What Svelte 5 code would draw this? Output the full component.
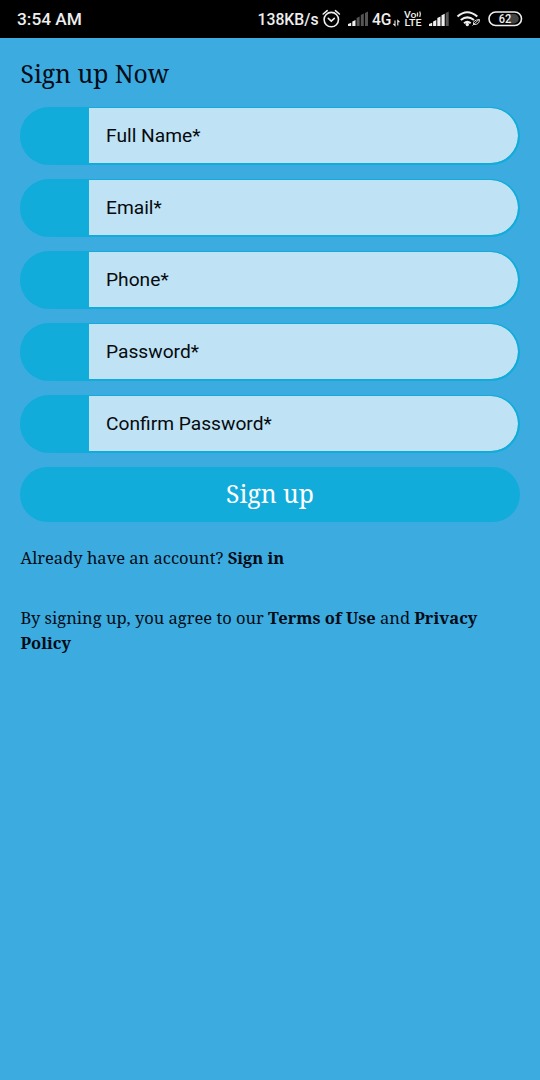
<script>
  const fields = [
    { label: 'Full Name*', type: 'text' },
    { label: 'Email*', type: 'email' },
    { label: 'Phone*', type: 'tel' },
    { label: 'Password*', type: 'password' },
    { label: 'Confirm Password*', type: 'password' }
  ];
</script>

<div class="screen">
  <header class="status">
    <span class="time">3:54 AM</span>
    <svg class="icons" width="290" height="38" viewBox="250 0 290 38" fill="none">
      <text class="st" x="257.5" y="25" font-size="17" textLength="61" lengthAdjust="spacingAndGlyphs">138KB/s</text>
      <g stroke="#eee" stroke-width="1.6" stroke-linecap="round">
        <circle cx="331.3" cy="19.6" r="7.2" />
        <path d="M328.3 18.4l3 2.700 3-2.700M323.200 14l4-3.300M339.400 14l-4-3.300" />
      </g>
      <g fill="#eee">
        <path d="M348 26v-2l3.200-1.200v3.200zM352.300 26v-4.500l3.200-1.500v6z" />
        <path fill="#555" d="M356.600 26v-8l3-1.400v9.400zM360.800 26v-11l3-1.500v12.500zM365 26v-13l3-1.500v14.500z" />
        <path d="M429 26v-2l3.200-1.200v3.200zM433.100 26v-4.500l3.200-1.500v6zM437.300 26v-8l3.200-1.400v9.400zM441.500 26v-10.800l3.200-1.500v12.300z" />
        <path fill="#555" d="M445.700 26v-13l3-1.500v14.500z" />
      </g>
      <text class="st" x="372" y="25" font-size="17" textLength="19.500" lengthAdjust="spacingAndGlyphs">4G</text>
      <path d="M395 20.500v5l-1.700-1.700M397.800 25.500v-5l1.700 1.700" stroke="#eee" stroke-width="1.100" />
      <text class="st" x="404" y="17.500" font-size="9" textLength="12.500" lengthAdjust="spacingAndGlyphs">Vo</text>
      <path d="M417.500 12.500v4M419.700 11.500q1.500 2.700 0 5.500" stroke="#ddd" stroke-width="1.300" />
      <text class="st" x="404.500" y="26" font-size="9.500" textLength="17" lengthAdjust="spacingAndGlyphs">LTE</text>
      <g stroke="#eee" stroke-width="2.100">
        <path d="M457.500 16.500q9.700-8.500 19.800 0M460.800 20q6.500-5.400 13.200 0M464 23.200q3.300-2.700 6.700 0" />
      </g>
      <circle cx="467.300" cy="24.500" r="1.700" fill="#eee" />
      <path d="M472.500 25.500l6.500-6M473.500 24.500q-1-4.500 6-5 0 5.500-6 5" stroke="#ddd" stroke-width="1" />
      <rect x="489" y="12" width="32.500" height="13.500" rx="6.700" stroke="#eee" stroke-width="1.600" />
      <path d="M509 14h5a4.700 4.700 0 0 1 0 9.500h-5z" fill="#444" />
      <text class="st" x="498.800" y="22.800" font-size="12" textLength="12.500" lengthAdjust="spacingAndGlyphs">62</text>
    </svg>
  </header>

  <main>
    <h1>Sign up Now</h1>
    <form>
      {#each fields as field}
        <label class="field">
          <span class="prefix"></span>
          <input type={field.type} placeholder={field.label} />
        </label>
      {/each}
      <button type="button">Sign up</button>
    </form>
    <p class="signin">Already have an account? <b>Sign in</b></p>
    <p class="terms">By signing up, you agree to our <b>Terms of Use</b> and <b>Privacy Policy</b></p>
  </main>
</div>

<style>
  :global(body) { margin: 0; background: #3cabe0; }
  .screen {
    box-sizing: border-box;
    min-height: 1080px;
    background: #3cabe0;
    color: #020c16;
    font-family: "Noto Serif", "DejaVu Serif Condensed", "DejaVu Serif", serif;
  }
  .status {
    height: 38px;
    background: #000;
    display: flex;
    align-items: center;
    justify-content: space-between;
    padding-left: 17px;
  }
  .time { font: 500 17.300px Roboto, sans-serif; color: #eee; }
  .icons { display: block; }
  .st { fill: #eee; font-family: Roboto, sans-serif; font-weight: 500; }
  main { padding: 18px 20px 0; }
  h1 { margin: 0 0 15px; padding-left: 0.500px; font-size: 24.700px; line-height: 36px; font-weight: 400; }
  form { display: flex; flex-direction: column; gap: 14px; }
  .field {
    box-sizing: border-box;
    height: 58px;
    display: flex;
    border: solid #12acdb;
    border-width: 1px 2px 2px 0;
    border-radius: 29px;
    background: #12acdb;
    overflow: hidden;
  }
  .prefix { width: 69px; flex: none; }
  input {
    flex: 1;
    min-width: 0;
    border: 0;
    border-radius: 0 27px 27px 0;
    padding: 0 17px 1px;
    background: #bfe2f4;
    font: 400 19.200px Roboto, sans-serif;
  }
  input::placeholder { color: #060a0e; opacity: 1; }
  button {
    height: 55px;
    border: 0;
    padding: 0 0 2px;
    border-radius: 28px;
    background: #12acdb;
    color: #fff;
    font: 400 24.700px/53px "Noto Serif", "DejaVu Serif Condensed", "DejaVu Serif", serif;
  }
  p { margin: 0; padding-left: 0.500px; font-size: 16.500px; line-height: 25px; }
  .signin { margin-top: 23px; }
  .terms { margin-top: 35px; }
</style>
